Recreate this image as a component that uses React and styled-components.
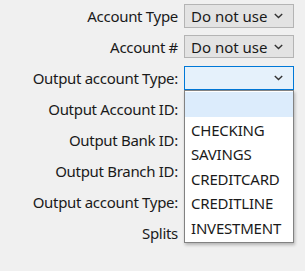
import React from 'react';
import styled, { createGlobalStyle } from 'styled-components';

const GlobalStyle = createGlobalStyle`
  html, body {
    margin: 0;
    padding: 0;
    background: #f0f0f0;
  }
  body {
    font-family: "Segoe UI", "Noto Sans", "Open Sans", sans-serif;
    font-size: 15px;
    color: #1a1a1a;
  }
`;

const Form = styled.div`
  width: 305px;
  height: 271px;
  box-sizing: border-box;
  padding-top: 4px;
  display: grid;
  grid-template-columns: 178px 110px;
  grid-auto-rows: 31px;
  column-gap: 6px;
  align-items: start;
`;

const Label = styled.div`
  text-align: right;
  height: 25px;
  line-height: 25px;
  white-space: nowrap;
  letter-spacing: -0.3px;
`;

const Cell = styled.div`
  position: relative;
  height: 24px;
`;

const Combo = styled.div`
  box-sizing: border-box;
  height: ${p => (p.$short ? 23 : 24)}px;
  border: 1px solid ${p => (p.$focused ? '#0078d7' : '#b4b4b4')};
  background: ${p => (p.$focused ? '#e5f1fb' : '#e3e3e3')};
  display: flex;
  align-items: center;
  justify-content: space-between;
  padding: 0 10px 0 6px;
  line-height: 20px;
`;

const Chevron = () => (
  <svg width="9" height="6" viewBox="0 0 9 6" fill="none">
    <path d="M0.8 1L4.5 4.6L8.2 1" stroke="#333" strokeWidth="1.4" />
  </svg>
);

const List = styled.div`
  position: absolute;
  top: 24px;
  left: 0;
  width: 110px;
  box-sizing: border-box;
  border: 1px solid #828282;
  background: #fff;
  padding: 1px 0 3px;
  box-shadow: 1px 2px 3px rgba(0, 0, 0, 0.25);
  z-index: 2;
`;

const Item = styled.div`
  height: 24.5px;
  line-height: 26px;
  padding-left: 6px;
  background: ${p => (p.$active ? '#dcecfc' : 'transparent')};
  letter-spacing: -0.2px;
`;

const options = ['', 'CHECKING', 'SAVINGS', 'CREDITCARD', 'CREDITLINE', 'INVESTMENT'];

const App = () => (
  <>
    <GlobalStyle />
    <Form>
      <Label>Account Type</Label>
      <Cell>
        <Combo>Do not use <Chevron /></Combo>
      </Cell>

      <Label>Account #</Label>
      <Cell>
        <Combo $short>Do not use <Chevron /></Combo>
      </Cell>

      <Label>Output account Type:</Label>
      <Cell>
        <Combo $focused><span /> <Chevron /></Combo>
        <List>
          {options.map((o, i) => (
            <Item key={i} $active={i === 0}>{o}</Item>
          ))}
        </List>
      </Cell>

      <Label>Output Account ID:</Label>
      <Cell />
      <Label>Output Bank ID:</Label>
      <Cell />
      <Label>Output Branch ID:</Label>
      <Cell />
      <Label>Output account Type:</Label>
      <Cell />
      <Label>Splits</Label>
      <Cell />
    </Form>
  </>
);

export default App;
